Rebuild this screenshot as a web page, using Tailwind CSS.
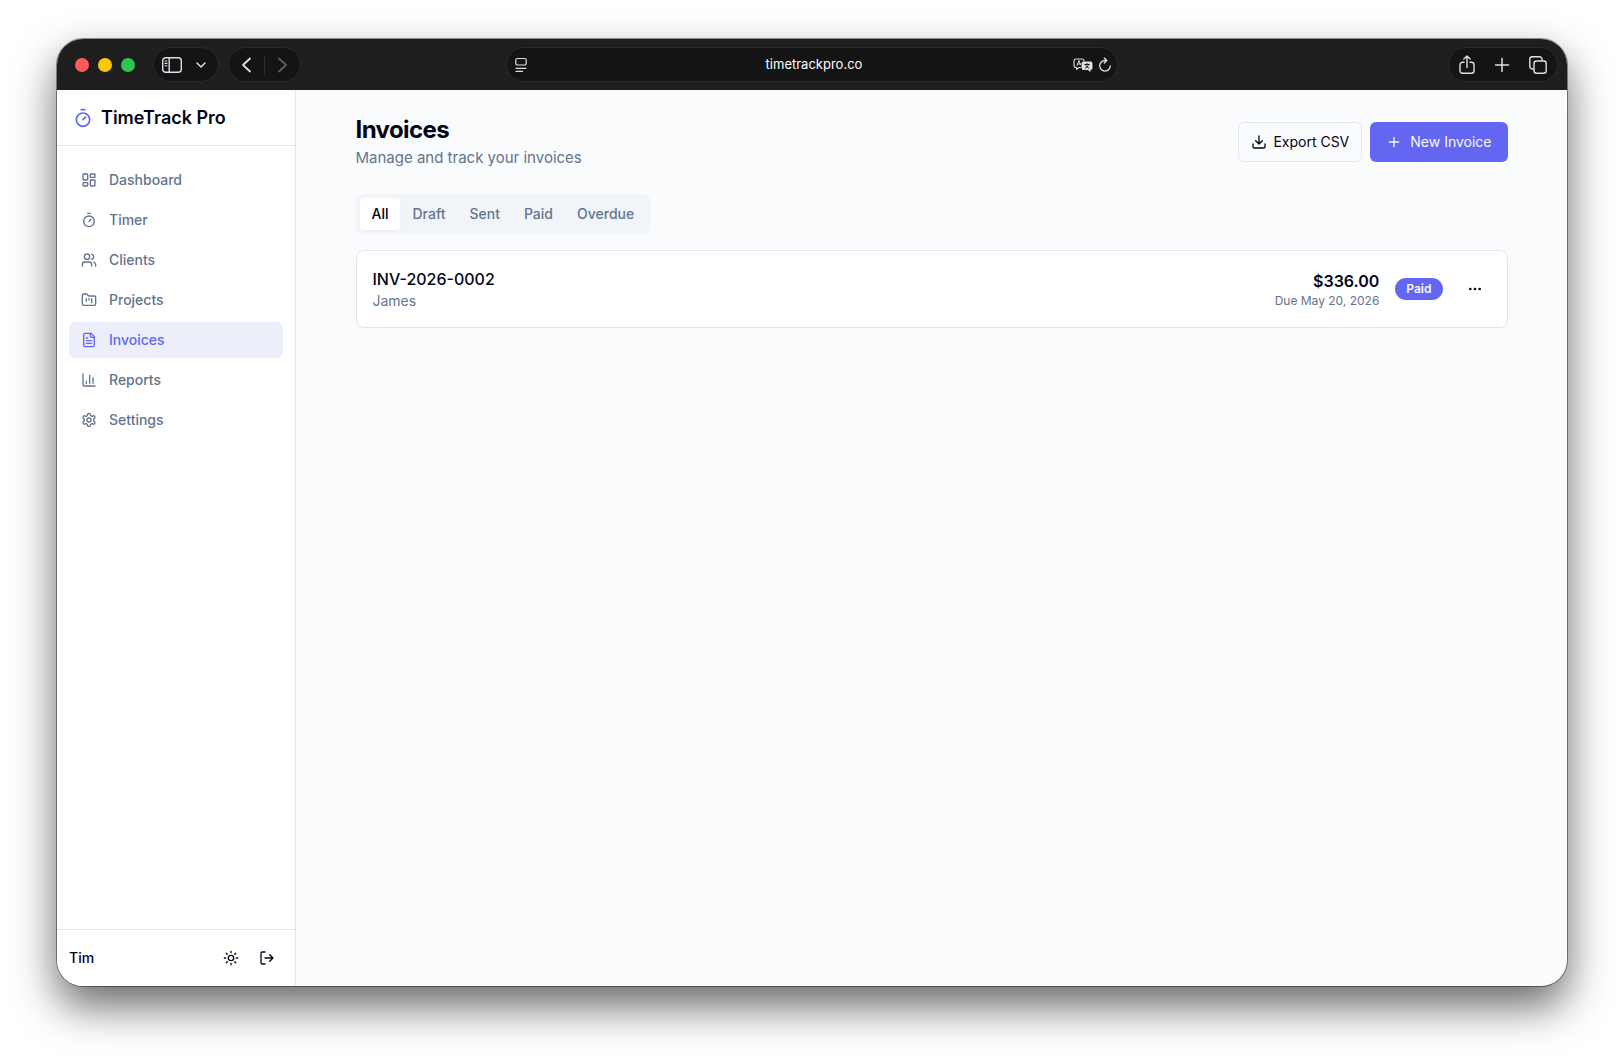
<!DOCTYPE html>
<html lang="en">
<head>
    <meta charset="UTF-8">
    <meta name="viewport" content="width=device-width, initial-scale=1.0">
    <title>Invoices - TimeTrack Pro</title>
    <script src="https://cdn.jsdelivr.net/npm/@tailwindcss/browser@4"></script>
</head>
<body class="h-screen bg-white px-[57px] pt-[39px] pb-[74px] font-['Inter',sans-serif] text-slate-950">

<!-- Browser window -->
<div class="flex h-full flex-col overflow-hidden rounded-[26px] bg-[#fafbfd] shadow-[0_0_0_1px_rgba(0,0,0,0.4),0_20px_44px_rgba(0,0,0,0.6)]">

    <!-- Toolbar -->
    <header class="grid h-[51px] shrink-0 grid-cols-[1fr_612px_1fr] items-center bg-[#1e1e1e] text-[#dcdfea]">
        <div class="flex items-center pl-[18px]">
            <div class="flex gap-[9px]">
                <button aria-label="Close" class="size-[14px] rounded-full bg-[#ff5b5b]"></button>
                <button aria-label="Minimize" class="size-[14px] rounded-full bg-[#fbc800]"></button>
                <button aria-label="Zoom" class="size-[14px] rounded-full bg-[#2fc453]"></button>
            </div>
            <div class="ml-[18px] flex h-[35px] items-center gap-[14px] rounded-full border border-[#2b2b2b] bg-[#141414] pr-3 pl-2">
                <button aria-label="Show sidebar">
                    <svg class="h-4 w-5" viewBox="0 0 20 16" fill="none" stroke="currentColor" stroke-width="1.4" stroke-linecap="round"><rect x="0.7" y="0.7" width="18.6" height="14.6" rx="3"/><path d="M7.2 1v14"/><path d="M3 4h2M3 6.4h2M3 8.8h2" stroke-width="1.1"/></svg>
                </button>
                <button aria-label="Tab groups">
                    <svg class="size-[10px]" viewBox="0 0 10 10" fill="none" stroke="currentColor" stroke-width="1.5" stroke-linecap="round" stroke-linejoin="round"><path d="M1 3l4 4 4-4"/></svg>
                </button>
            </div>
            <div class="ml-[9px] flex h-[35px] items-center rounded-full border border-[#2b2b2b] bg-[#141414] px-3">
                <button aria-label="Back">
                    <svg class="h-4 w-3" viewBox="0 0 12 16" fill="none" stroke="currentColor" stroke-width="1.8" stroke-linecap="round" stroke-linejoin="round"><path d="M9 1.5L2 8l7 6.5"/></svg>
                </button>
                <span class="mx-[11px] h-5 w-px bg-[#2b2b2b]"></span>
                <button aria-label="Forward" class="text-[#5e5e5e]">
                    <svg class="h-4 w-3" viewBox="0 0 12 16" fill="none" stroke="currentColor" stroke-width="1.8" stroke-linecap="round" stroke-linejoin="round"><path d="M3 1.5L10 8l-7 6.5"/></svg>
                </button>
            </div>
        </div>

        <div class="flex h-[35px] items-center rounded-full border border-[#2b2b2b] bg-[#141414] pr-[5px] pl-2">
            <button aria-label="Page menu">
                <svg class="h-4 w-3" viewBox="0 0 12 16" fill="none" stroke="currentColor" stroke-width="1.2" stroke-linecap="round"><rect x="0.8" y="1.5" width="10.4" height="6.5" rx="1.6"/><path d="M1 11.3h10M1 14.3h6.500"/></svg>
            </button>
            <input type="text" aria-label="Address" value="timetrackpro.co" class="min-w-0 flex-1 bg-transparent pl-7 text-center text-[13px] text-white outline-none">
            <button aria-label="Translate">
                <svg class="h-[14px] w-5" viewBox="0 0 20 14" fill="none" stroke="currentColor" stroke-linecap="round" stroke-linejoin="round"><path d="M7.500 9.500H6L3.500 11.500V9.500H3A2 2 0 0 1 1 7.500V3a2 2 0 0 1 2-2h6a2 2 0 0 1 2 2" stroke-width="1.1"/><path d="M4 7.500l2-5 1.500 4M4.800 6h2.200" stroke-width="1"/><path d="M10.500 3.500h7a2 2 0 0 1 2 2V10a2 2 0 0 1-2 2v1.900L15 12h-4.500a2 2 0 0 1-2-2V5.500a2 2 0 0 1 2-2z" fill="currentColor" stroke="none"/><path d="M11.800 6.500h4.500M14 5.400v1M15.500 6.700c-.5 1.800-1.800 2.800-3.300 3.500M12.700 6.900c.5 1.500 1.700 2.700 3.300 3.300" stroke="#141414" stroke-width="0.9"/></svg>
            </button>
            <button aria-label="Reload" class="ml-[5px]">
                <svg class="h-4 w-[14px]" viewBox="0 0 14 16" fill="none" stroke="currentColor" stroke-width="1.3" stroke-linecap="round" stroke-linejoin="round"><path d="M7 3.500A5.300 5.300 0 1 0 12.300 8.800M7 3.500h1.500M6.300 1l2.500 2.500L6.300 6"/></svg>
            </button>
        </div>

        <div class="flex justify-end pr-[9px]">
            <div class="flex h-[35px] items-center gap-[18px] rounded-full border border-[#2b2b2b] bg-[#141414] px-[10px]">
                <button aria-label="Share">
                    <svg class="h-5 w-4" viewBox="0 0 16 20" fill="none" stroke="currentColor" stroke-width="1.4" stroke-linecap="round" stroke-linejoin="round"><path d="M5 7.200H3.500A2.500 2.500 0 0 0 1 9.700v6A2.500 2.500 0 0 0 3.500 18.200h9a2.500 2.500 0 0 0 2.500-2.500v-6a2.500 2.500 0 0 0-2.500-2.500H11M8 12.500V1M4.800 4L8 1l3.200 3"/></svg>
                </button>
                <button aria-label="New tab">
                    <svg class="h-4 w-[18px]" viewBox="0 0 18 16" fill="none" stroke="currentColor" stroke-width="1.5" stroke-linecap="round"><path d="M9 1.500v13M2.500 8h13"/></svg>
                </button>
                <button aria-label="Tab overview">
                    <svg class="size-[18px]" viewBox="0 0 18 18" fill="none" stroke="currentColor" stroke-width="1.4" stroke-linejoin="round"><rect x="5" y="5" width="12.200" height="12.200" rx="2.500"/><path d="M5 13H3.300A2.500 2.500 0 0 1 .8 10.500V3.300A2.500 2.500 0 0 1 3.300.8h7.200A2.500 2.500 0 0 1 13 3.300V5"/></svg>
                </button>
            </div>
        </div>
    </header>

    <!-- Page -->
    <div class="flex min-h-0 flex-1">

        <!-- Sidebar -->
        <aside class="flex w-[239px] shrink-0 flex-col border-r border-[#e2e5f0] bg-white">
            <div class="flex h-14 shrink-0 items-center gap-2 border-b border-[#e2e5f0] px-4">
                <svg class="size-5 text-[#6366f1]" viewBox="0 0 24 24" fill="none" stroke="currentColor" stroke-width="2" stroke-linecap="round" stroke-linejoin="round"><path d="M10 2h4M12 14l3-3"/><circle cx="12" cy="14" r="8"/></svg>
                <span class="text-lg font-semibold">TimeTrack Pro</span>
            </div>

            <nav class="flex flex-1 flex-col gap-1 px-3 py-4 text-sm font-medium text-slate-500">
                <a href="#" class="flex h-9 items-center gap-3 rounded-md px-3">
                    <svg class="size-4" viewBox="0 0 24 24" fill="none" stroke="currentColor" stroke-width="2" stroke-linecap="round" stroke-linejoin="round"><rect x="3" y="3" width="7" height="9" rx="1"/><rect x="14" y="3" width="7" height="5" rx="1"/><rect x="14" y="12" width="7" height="9" rx="1"/><rect x="3" y="16" width="7" height="5" rx="1"/></svg>
                    Dashboard
                </a>
                <a href="#" class="flex h-9 items-center gap-3 rounded-md px-3">
                    <svg class="size-4" viewBox="0 0 24 24" fill="none" stroke="currentColor" stroke-width="2" stroke-linecap="round" stroke-linejoin="round"><path d="M10 2h4M12 14l3-3"/><circle cx="12" cy="14" r="8"/></svg>
                    Timer
                </a>
                <a href="#" class="flex h-9 items-center gap-3 rounded-md px-3">
                    <svg class="size-4" viewBox="0 0 24 24" fill="none" stroke="currentColor" stroke-width="2" stroke-linecap="round" stroke-linejoin="round"><path d="M16 21v-2a4 4 0 0 0-4-4H6a4 4 0 0 0-4 4v2"/><circle cx="9" cy="7" r="4"/><path d="M22 21v-2a4 4 0 0 0-3-3.870M16 3.130a4 4 0 0 1 0 7.750"/></svg>
                    Clients
                </a>
                <a href="#" class="flex h-9 items-center gap-3 rounded-md px-3">
                    <svg class="size-4" viewBox="0 0 24 24" fill="none" stroke="currentColor" stroke-width="2" stroke-linecap="round" stroke-linejoin="round"><path d="M4 20h16a2 2 0 0 0 2-2V8a2 2 0 0 0-2-2h-7.930a2 2 0 0 1-1.660-.9l-.82-1.200A2 2 0 0 0 7.930 3H4a2 2 0 0 0-2 2v13c0 1.100.9 2 2 2Z"/><path d="M8 10v4M12 10v2M16 10v6"/></svg>
                    Projects
                </a>
                <a href="#" aria-current="page" class="flex h-9 items-center gap-3 rounded-md bg-[#eceffa] px-3 text-[#6366f1]">
                    <svg class="size-4" viewBox="0 0 24 24" fill="none" stroke="currentColor" stroke-width="2" stroke-linecap="round" stroke-linejoin="round"><path d="M15 2H6a2 2 0 0 0-2 2v16a2 2 0 0 0 2 2h12a2 2 0 0 0 2-2V7Z"/><path d="M14 2v4a2 2 0 0 0 2 2h4M10 9H8M16 13H8M16 17H8"/></svg>
                    Invoices
                </a>
                <a href="#" class="flex h-9 items-center gap-3 rounded-md px-3">
                    <svg class="size-4" viewBox="0 0 24 24" fill="none" stroke="currentColor" stroke-width="2" stroke-linecap="round" stroke-linejoin="round"><path d="M3 3v16a2 2 0 0 0 2 2h16M18 17V9M13 17V5M8 17v-3"/></svg>
                    Reports
                </a>
                <a href="#" class="flex h-9 items-center gap-3 rounded-md px-3">
                    <svg class="size-4" viewBox="0 0 24 24" fill="none" stroke="currentColor" stroke-width="2" stroke-linecap="round" stroke-linejoin="round"><path d="M12.220 2h-.44a2 2 0 0 0-2 2v.18a2 2 0 0 1-1 1.730l-.43.25a2 2 0 0 1-2 0l-.15-.08a2 2 0 0 0-2.730.73l-.22.38a2 2 0 0 0 .73 2.730l.15.1a2 2 0 0 1 1 1.720v.51a2 2 0 0 1-1 1.740l-.15.09a2 2 0 0 0-.73 2.730l.22.38a2 2 0 0 0 2.730.73l.15-.08a2 2 0 0 1 2 0l.43.25a2 2 0 0 1 1 1.730V20a2 2 0 0 0 2 2h.44a2 2 0 0 0 2-2v-.18a2 2 0 0 1 1-1.730l.43-.25a2 2 0 0 1 2 0l.15.08a2 2 0 0 0 2.730-.73l.22-.39a2 2 0 0 0-.73-2.730l-.15-.08a2 2 0 0 1-1-1.740v-.5a2 2 0 0 1 1-1.740l.15-.09a2 2 0 0 0 .73-2.730l-.22-.38a2 2 0 0 0-2.730-.73l-.15.08a2 2 0 0 1-2 0l-.43-.25a2 2 0 0 1-1-1.730V4a2 2 0 0 0-2-2z"/><circle cx="12" cy="12" r="3"/></svg>
                    Settings
                </a>
            </nav>

            <div class="flex h-[57px] shrink-0 items-center gap-1 border-t border-[#e2e5f0] px-3">
                <span class="flex-1 text-sm font-medium">Tim</span>
                <button aria-label="Toggle theme" class="flex size-8 items-center justify-center rounded-md">
                    <svg class="size-4" viewBox="0 0 24 24" fill="none" stroke="currentColor" stroke-width="2" stroke-linecap="round" stroke-linejoin="round"><circle cx="12" cy="12" r="4"/><path d="M12 2v2M12 20v2M4.930 4.930l1.410 1.410M17.660 17.660l1.410 1.410M2 12h2M20 12h2M6.340 17.660l-1.410 1.410M19.070 4.930l-1.410 1.410"/></svg>
                </button>
                <button aria-label="Log out" class="flex size-8 items-center justify-center rounded-md">
                    <svg class="size-4" viewBox="0 0 24 24" fill="none" stroke="currentColor" stroke-width="2" stroke-linecap="round" stroke-linejoin="round"><path d="M9 21H5a2 2 0 0 1-2-2V5a2 2 0 0 1 2-2h4M16 17l5-5-5-5M21 12H9"/></svg>
                </button>
            </div>
        </aside>

        <!-- Main content -->
        <main class="min-w-0 flex-1 overflow-auto py-6">
            <div class="mx-auto max-w-6xl">
                <div class="flex items-center justify-between">
                    <div>
                        <h1 class="text-2xl font-bold tracking-tight">Invoices</h1>
                        <p class="text-[15px] leading-6 text-slate-500">Manage and track your invoices</p>
                    </div>
                    <div class="flex gap-2 text-sm">
                        <button class="flex h-10 items-center gap-[6px] rounded-md border border-[#e2e5f0] px-3">
                            <svg class="size-4" viewBox="0 0 24 24" fill="none" stroke="currentColor" stroke-width="2" stroke-linecap="round" stroke-linejoin="round"><path d="M21 15v4a2 2 0 0 1-2 2H5a2 2 0 0 1-2-2v-4M7 10l5 5 5-5M12 15V3"/></svg>
                            Export CSV
                        </button>
                        <button class="flex h-10 items-center gap-2 rounded-md bg-[#6366f1] px-4 text-slate-50">
                            <svg class="size-4" viewBox="0 0 24 24" fill="none" stroke="currentColor" stroke-width="2" stroke-linecap="round"><path d="M5 12h14M12 5v14"/></svg>
                            New Invoice
                        </button>
                    </div>
                </div>

                <!-- Status filter -->
                <div class="mt-6 inline-flex h-10 items-center rounded-md bg-slate-100 p-1 align-top text-sm font-medium text-slate-500" role="tablist">
                    <button role="tab" aria-selected="true" class="h-8 rounded-sm bg-white px-3 text-slate-950 shadow-xs">All</button>
                    <button role="tab" aria-selected="false" class="h-8 px-3">Draft</button>
                    <button role="tab" aria-selected="false" class="h-8 px-3">Sent</button>
                    <button role="tab" aria-selected="false" class="h-8 px-3">Paid</button>
                    <button role="tab" aria-selected="false" class="h-8 px-3">Overdue</button>
                </div>

                <!-- Invoice row -->
                <div class="mt-4 flex items-center gap-4 rounded-lg border border-[#e2e5f0] bg-white p-4">
                    <div class="flex-1">
                        <p class="font-medium">INV-2026-0002</p>
                        <p class="text-sm text-slate-500">James</p>
                    </div>
                    <div class="text-right">
                        <p class="font-semibold">$336.00</p>
                        <p class="text-xs text-slate-500">Due May 20, 2026</p>
                    </div>
                    <span class="rounded-full border border-transparent bg-[#6366f1] px-[10px] py-0.5 text-xs font-semibold text-slate-50">Paid</span>
                    <button aria-label="Invoice actions" class="flex size-8 items-center justify-center rounded-md">
                        <svg class="size-4" viewBox="0 0 24 24" fill="currentColor" stroke="currentColor" stroke-width="2"><circle cx="12" cy="12" r="1"/><circle cx="19" cy="12" r="1"/><circle cx="5" cy="12" r="1"/></svg>
                    </button>
                </div>
            </div>
        </main>
    </div>
</div>

</body>
</html>
